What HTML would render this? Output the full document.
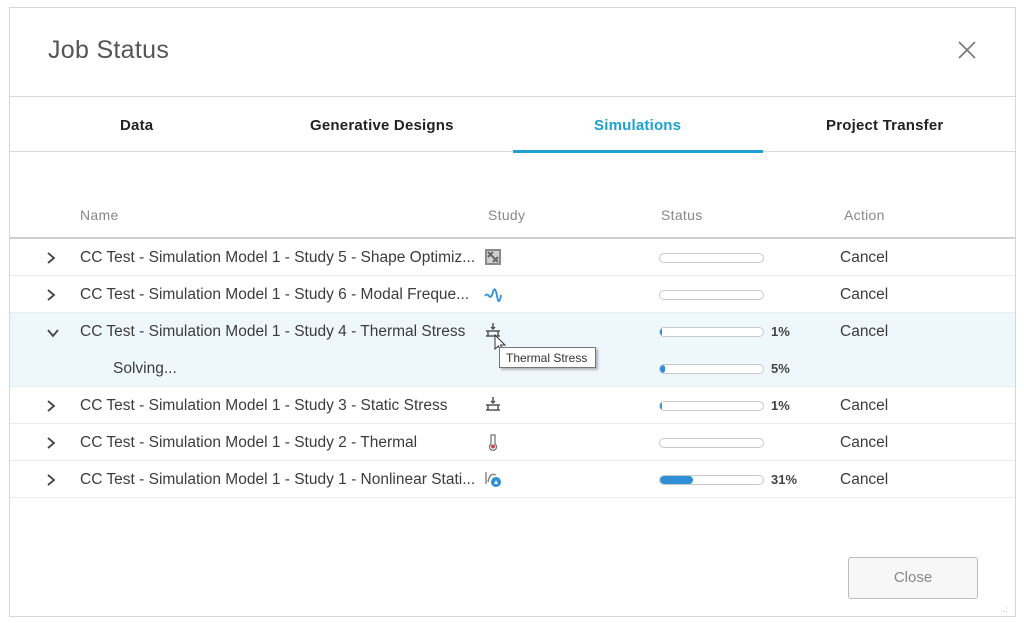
<!DOCTYPE html>
<html><head><meta charset="utf-8"><style>
*{box-sizing:border-box;margin:0;padding:0}
body{width:1024px;height:623px;background:#fff;font-family:"Liberation Sans",sans-serif;position:relative;overflow:hidden;color:#3c3c3c}
.dlg{position:absolute;left:9px;top:7px;width:1007px;height:610px;border:1px solid #d6d6d6;background:#fff}
.abs{position:absolute}
.title{left:38px;top:28px;font-size:25px;color:#555;letter-spacing:0.3px}
.hline{position:absolute;left:0;right:0;height:1px;background:#d9d9d9}
.tab{position:absolute;top:109px;font-size:15px;font-weight:bold;color:#222;letter-spacing:0.2px}
.th{position:absolute;top:199px;font-size:14px;color:#888;letter-spacing:0.3px}
.row{position:absolute;left:0;right:0;height:37px;font-size:15.5px}
.row .t{position:absolute;left:70px;top:10px;white-space:nowrap}
.chev{position:absolute;left:36px;top:13px}
.bar{position:absolute;left:649px;top:14px;width:105px;height:10px;border:1px solid #c8c8c8;border-radius:5px;background:#fff;overflow:hidden}
.bar i{display:block;height:100%;background:#2e8fd6;border-radius:5px}
.pct{position:absolute;left:761px;top:11px;font-size:13px;font-weight:bold;color:#444}
.cancel{position:absolute;left:830px;top:10px}
.sep{position:absolute;left:0;right:0;bottom:0;height:1px;background:#ececec}
.ic{position:absolute;left:474px;top:9px;width:18px;height:18px}
</style></head><body>
<div class="dlg">
 <div class="abs title">Job Status</div>
 <svg class="abs" style="left:947px;top:32px" width="20" height="20"><path d="M2 2L18 18M18 2L2 18" stroke="#777" stroke-width="1.6"/></svg>
 <div class="hline" style="top:88px"></div>
 <div class="tab" style="left:110px">Data</div>
 <div class="tab" style="left:300px">Generative Designs</div>
 <div class="tab" style="left:584px;color:#1ea0d0">Simulations</div>
 <div class="tab" style="left:816px">Project Transfer</div>
 <div class="hline" style="top:143px"></div>
 <div class="abs" style="left:503px;top:142px;width:250px;height:3px;background:#1ea0d0"></div>
 <div class="th" style="left:70px">Name</div>
 <div class="th" style="left:478px">Study</div>
 <div class="th" style="left:651px">Status</div>
 <div class="th" style="left:834px">Action</div>
 <div class="hline" style="top:229px;background:#cfcfcf;height:2px"></div>

 <div class="row" style="top:231px"><svg class="chev" width="10" height="12"><path d="M2 1L8 6L2 11" fill="none" stroke="#444" stroke-width="1.8"/></svg><span class="t">CC Test - Simulation Model 1 - Study 5 - Shape Optimiz...</span>
  <svg class="ic" viewBox="0 0 18 18"><rect x="1" y="1" width="16" height="16" fill="#8a8a8a"/><rect x="3" y="3" width="12" height="12" fill="#cfcfcf"/><path d="M4 4L14 14M4 9L9 4M9 14L14 9" stroke="#666" stroke-width="2"/></svg>
  <div class="bar"></div><span class="cancel">Cancel</span><div class="sep"></div></div>
 <div class="row" style="top:268px"><svg class="chev" width="10" height="12"><path d="M2 1L8 6L2 11" fill="none" stroke="#444" stroke-width="1.8"/></svg><span class="t">CC Test - Simulation Model 1 - Study 6 - Modal Freque...</span>
  <svg class="ic" viewBox="0 0 18 18"><path d="M1 11Q3 8 5 11T9 7T13 11T17 10" fill="none" stroke="#2e8fd6" stroke-width="1.8"/></svg>
  <div class="bar"></div><span class="cancel">Cancel</span><div class="sep"></div></div>
 <div class="row" style="top:305px;height:74px;background:#eef7fc">
  <svg class="chev" width="12" height="10" style="left:37px;top:15px"><path d="M1 2L6 8L11 2" fill="none" stroke="#444" stroke-width="1.8"/></svg><span class="t">CC Test - Simulation Model 1 - Study 4 - Thermal Stress</span>
  <svg class="ic" viewBox="0 0 18 18"><path d="M9 1V7M7 5L9 7L11 5M2 9H16M4 9V14M14 9V14M2 14H16" stroke="#555" stroke-width="1.5" fill="none"/></svg>
  <div class="bar"><i style="width:2px"></i></div><span class="pct">1%</span><span class="cancel">Cancel</span>
  <span class="t" style="left:103px;top:47px">Solving...</span>
  <div class="bar" style="top:51px"><i style="width:5px"></i></div><span class="pct" style="top:48px">5%</span>
  <div class="sep"></div></div>
 <svg class="abs" style="left:484px;top:326px" width="14" height="20"><path d="M1 1L1 15L4.5 12L7 18L9 17L6.5 11L11 11Z" fill="#fff" stroke="#333" stroke-width="1"/></svg>
 <div class="abs" style="left:489px;top:339px;width:97px;height:21px;border:1px solid #767676;background:#fff;box-shadow:2px 2px 2px rgba(0,0,0,.25);font-size:12px;padding:3px 0 0 6px;color:#333">Thermal Stress</div>
 <div class="row" style="top:379px"><svg class="chev" width="10" height="12"><path d="M2 1L8 6L2 11" fill="none" stroke="#444" stroke-width="1.8"/></svg><span class="t">CC Test - Simulation Model 1 - Study 3 - Static Stress</span>
  <svg class="ic" viewBox="0 0 18 18"><path d="M9 1V7M7 5L9 7L11 5M2 9H16M4 9V14M14 9V14M2 14H16" stroke="#555" stroke-width="1.5" fill="none"/></svg>
  <div class="bar"><i style="width:2px"></i></div><span class="pct">1%</span><span class="cancel">Cancel</span><div class="sep"></div></div>
 <div class="row" style="top:416px"><svg class="chev" width="10" height="12"><path d="M2 1L8 6L2 11" fill="none" stroke="#444" stroke-width="1.8"/></svg><span class="t">CC Test - Simulation Model 1 - Study 2 - Thermal</span>
  <svg class="ic" viewBox="0 0 18 18"><path d="M7 2H11V11A3.5 3.5 0 1 1 7 11Z" fill="#fff" stroke="#777" stroke-width="1.3"/><circle cx="9" cy="13.5" r="2" fill="#d0445a"/></svg>
  <div class="bar"></div><span class="cancel">Cancel</span><div class="sep"></div></div>
 <div class="row" style="top:453px"><svg class="chev" width="10" height="12"><path d="M2 1L8 6L2 11" fill="none" stroke="#444" stroke-width="1.8"/></svg><span class="t">CC Test - Simulation Model 1 - Study 1 - Nonlinear Stati...</span>
  <svg class="ic" viewBox="0 0 18 18"><path d="M2 2V14M4 12Q6 2 12 5" stroke="#888" stroke-width="1.5" fill="none"/><circle cx="12" cy="12" r="5" fill="#2e8fd6"/><path d="M10 14L12 10L14 14Z" fill="#fff"/></svg>
  <div class="bar"><i style="width:33px"></i></div><span class="pct">31%</span><span class="cancel">Cancel</span><div class="sep"></div></div>

 <div class="abs" style="left:838px;top:549px;width:130px;height:42px;border:1px solid #bdbdbd;border-radius:3px;background:#f7f7f7;font-size:15px;color:#888;text-align:center;line-height:40px">Close</div>
 <div class="abs" style="left:993px;top:597px;font-size:8px;color:#999">.:</div>
</div>
</body></html>
